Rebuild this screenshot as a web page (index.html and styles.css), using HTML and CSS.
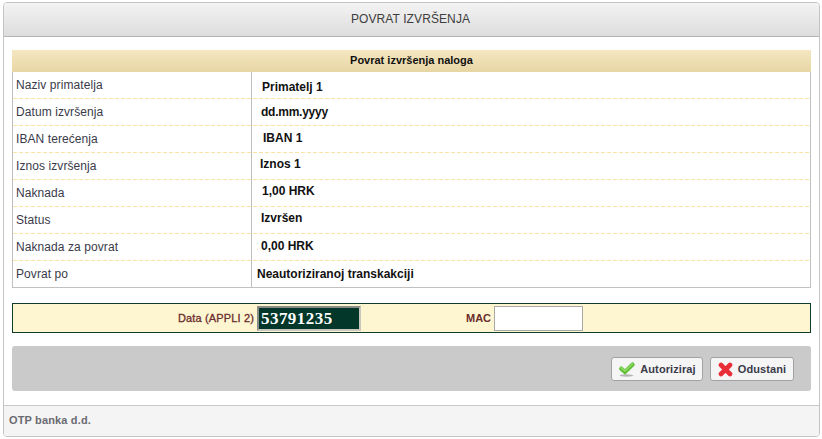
FILE: index.html
```html
<!DOCTYPE html>
<html lang="hr">
<head>
<meta charset="utf-8">
<title>Povrat izvršenja</title>
<link rel="stylesheet" href="styles.css">
</head>
<body>
<div class="window">
  <header class="win-head">POVRAT IZVRŠENJA</header>
  <main class="win-body">
    <section class="details">
      <h2 class="details-head">Povrat izvršenja naloga</h2>
      <div class="row"><div class="lbl">Naziv primatelja</div><div class="val v1">Primatelj 1</div></div>
      <div class="row"><div class="lbl">Datum izvršenja</div><div class="val v2">dd.mm.yyyy</div></div>
      <div class="row"><div class="lbl">IBAN terećenja</div><div class="val v3">IBAN 1</div></div>
      <div class="row"><div class="lbl">Iznos izvršenja</div><div class="val v4">Iznos 1</div></div>
      <div class="row"><div class="lbl">Naknada</div><div class="val v5">1,00 HRK</div></div>
      <div class="row"><div class="lbl">Status</div><div class="val v6">Izvršen</div></div>
      <div class="row"><div class="lbl">Naknada za povrat</div><div class="val v7">0,00 HRK</div></div>
      <div class="row last"><div class="lbl">Povrat po</div><div class="val v8">Neautoriziranoj transkakciji</div></div>
    </section>
    <section class="auth">
      <label class="auth-lbl data-lbl">Data (APPLI 2)</label>
      <div class="challenge">53791235</div>
      <label class="auth-lbl mac-lbl">MAC</label>
      <input class="mac" type="text" aria-label="MAC">
    </section>
    <section class="actions">
      <button class="btn btn-ok" type="button">
        <svg class="ico" width="18" height="16" viewBox="0 0 18 16"><ellipse cx="8.5" cy="14.5" rx="7" ry="1.2" fill="#b4b4b4"/><path d="M3.2 7.6 L7 11 L14.6 3.6" fill="none" stroke="#62bf3a" stroke-width="4.2" stroke-linecap="round" stroke-linejoin="miter"/><path d="M3 6.6 L7 10 L14.4 3" fill="none" stroke="#90dd62" stroke-width="1.6" stroke-linecap="round"/></svg>
        Autoriziraj
      </button>
      <button class="btn btn-no" type="button">
        <svg class="ico" width="15" height="15" viewBox="0 0 15 15"><path d="M3 3 L12 12 M12 3 L3 12" fill="none" stroke="#ea2e38" stroke-width="4.6" stroke-linecap="round"/></svg>
        Odustani
      </button>
    </section>
  </main>
  <footer class="win-foot">OTP banka d.d.</footer>
</div>
</body>
</html>
```
FILE: styles.css
```css
* { box-sizing: border-box; }
html, body { margin: 0; padding: 0; background: #fff; }
body { padding: 2px 2px 2px 3px; font-family: "Liberation Sans", Arial, sans-serif; font-size: 12px; color: #333; }

.window { width: 817px; height: 435px; border: 1px solid #c4c4c4; border-radius: 4px; display: flex; flex-direction: column; overflow: hidden; background: #fff; }

.win-head { height: 34px; flex: none; border-bottom: 1px solid #b5b5b5; background: linear-gradient(#f3f3f3, #dddddd); text-align: center; line-height: 32px; font-size: 12px; letter-spacing: .1px; color: #3d3d3d; padding-right: 2px; }

.win-body { flex: 1; padding: 13px 8px 0 8px; }

.details { border: 1px solid #c0c0c0; border-top: 0; }
.details-head { margin: 0 -1px; height: 22px; background: linear-gradient(#f4e7c1, #e8d5a4); text-align: center; font-size: 11px; line-height: 21px; font-weight: bold; color: #111; }
.row { display: grid; grid-template-columns: 238px 1fr; height: 27px; background: repeating-linear-gradient(90deg, #f9e3a8 0 4px, transparent 4px 6px) bottom / 100% 1px no-repeat; }
.row.last { height: 26px; background: none; }
.lbl { padding: 2px 0 0 3px; line-height: 22px; letter-spacing: .08px; color: #3a3a4a; }
.val { border-left: 1px solid #c0c0c0; font-weight: bold; color: #111; line-height: 22px; }
.v1 { padding: 4px 0 0 10px; }
.v2 { padding: 2px 0 0 9px; letter-spacing: -.25px; }
.v3 { padding: 1px 0 0 11px; }
.v4 { padding: 0 0 0 8px; }
.v5 { padding: 0 0 0 10px; }
.v6 { padding: 0 0 0 9px; }
.v7 { padding: 1px 0 0 9px; }
.v7::before { content: ":"; position: absolute; margin-left: -5px; color: #f1e4bd; font-weight: normal; }
.v8 { padding: 2px 0 0 5px; }

.auth { margin-top: 15px; height: 30px; border: 1px solid #0f3d2c; background: #fdf6d1; display: flex; align-items: center; }
.auth-lbl { font-size: 11px; font-weight: bold; color: #6b2c2c; }
.data-lbl { margin-left: 165px; width: 76px; text-align: right; font-weight: normal; letter-spacing: .15px; -webkit-text-stroke: .3px #6b2c2c; white-space: nowrap; }
.challenge { margin-left: 3px; width: 104px; height: 25px; border: 2px solid #c8c8c0; border-top-color: #8d8d88; border-left-color: #8d8d88; background: #02372a; color: #fff; font-family: "Liberation Serif", "Times New Roman", serif; font-weight: bold; font-size: 17px; line-height: 21px; padding-left: 2px; letter-spacing: .45px; }
.mac-lbl { margin-left: 105px; width: 25px; text-align: right; }
.mac { margin: 0 0 0 3px; width: 89px; height: 25px; border: 1px solid #a9a9a9; background: #fff; padding: 0; }

.actions { margin-top: 13px; height: 45px; border-radius: 3px; background: #cacaca; display: flex; justify-content: flex-end; align-items: center; gap: 7px; padding: 1px 17px 0 0; }
.btn { height: 24px; padding: 0; border: 1px solid #a2a2a2; border-radius: 3px; background: #f5f5f5; font-family: "Liberation Sans", Arial, sans-serif; font-weight: bold; font-size: 11px; letter-spacing: .1px; color: #3a3a4a; display: flex; align-items: center; justify-content: center; }
.btn-ok { width: 92px; gap: 4px; }
.btn-no { width: 84px; gap: 5px; }
.ico { flex: none; }

.win-foot { height: 31px; flex: none; border-top: 1px solid #c9c9c9; background: #f4f4f4; padding-left: 5px; line-height: 29px; font-size: 11px; font-weight: bold; letter-spacing: .15px; color: #6a6a72; }
```
